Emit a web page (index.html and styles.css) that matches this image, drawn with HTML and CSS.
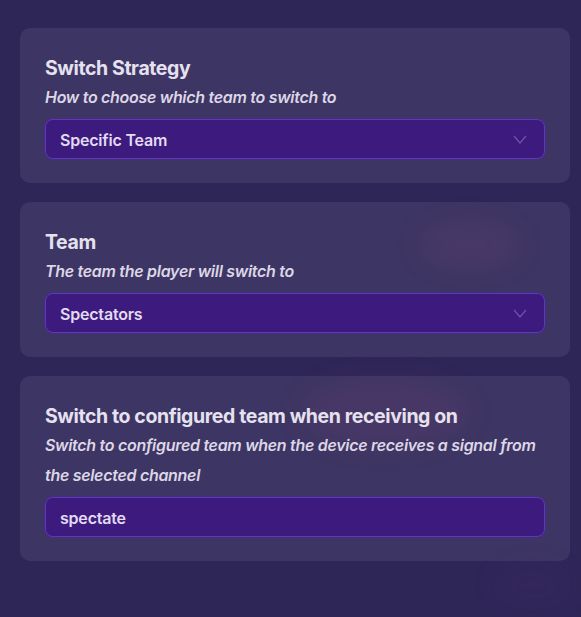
FILE: index.html
```html
<!DOCTYPE html>
<html>
<head>
<meta charset="utf-8">
<link rel="stylesheet" href="styles.css">
</head>
<body>
<div class="page">
  <div class="glow glow-a"></div>
  <div class="glow glow-b"></div>
  <div class="glow glow-c"></div>
  <section class="card">
    <div class="title">Switch Strategy</div>
    <div class="desc">How to choose which team to switch to</div>
    <div class="field select">
      <span class="value">Specific Team</span>
      <svg class="chev" width="14" height="9" viewBox="0 0 14 9"><path d="M1 1 L7 8 L13 1" fill="none" stroke="#6d52a6" stroke-width="1.3"/></svg>
    </div>
  </section>
  <section class="card">
    <div class="title">Team</div>
    <div class="desc">The team the player will switch to</div>
    <div class="field select">
      <span class="value">Spectators</span>
      <svg class="chev" width="14" height="9" viewBox="0 0 14 9"><path d="M1 1 L7 8 L13 1" fill="none" stroke="#6d52a6" stroke-width="1.3"/></svg>
    </div>
  </section>
  <section class="card">
    <div class="title">Switch to configured team when receiving on</div>
    <div class="desc">Switch to configured team when the device receives a signal from the selected channel</div>
    <div class="field">
      <span class="value">spectate</span>
    </div>
  </section>
</div>
</body>
</html>
```
FILE: styles.css
```css
html, body {
  margin: 0;
  padding: 0;
  background: #2f2658;
}
body {
  width: 581px;
  height: 617px;
  overflow: hidden;
  font-family: Inter, "Noto Sans", sans-serif;
}
.page {
  position: relative;
  width: 581px;
  height: 617px;
  box-sizing: border-box;
  padding: 28px 11px 0 20px;
  display: flex;
  flex-direction: column;
  gap: 19px;
  background: #2f2658;
  overflow: hidden;
}
.glow {
  position: absolute;
  border-radius: 50%;
  filter: blur(12px);
  pointer-events: none;
}
.glow-a {
  left: 420px;
  top: 222px;
  width: 100px;
  height: 46px;
  background: rgba(110, 60, 110, 0.18);
}
.glow-b {
  left: 300px;
  top: 378px;
  width: 170px;
  height: 70px;
  background: rgba(120, 60, 110, 0.14);
}
.glow-c {
  left: 495px;
  top: 565px;
  width: 75px;
  height: 40px;
  background: rgba(90, 50, 110, 0.1);
}
.card {
  position: relative;
  width: 550px;
  box-sizing: border-box;
  padding: 26px 25px 24px 25px;
  border-radius: 10px;
  background: rgba(255, 255, 255, 0.07);
}
.title {
  font-size: 19.5px;
  line-height: 28px;
  font-weight: 700;
  letter-spacing: -0.4px;
  color: #e6e1ef;
}
.desc {
  font-size: 16px;
  line-height: 30px;
  font-style: italic;
  font-weight: 600;
  letter-spacing: -0.3px;
  color: #dcd6e6;
  margin-bottom: 7px;
}
.field {
  height: 40px;
  box-sizing: border-box;
  border: 1px solid #6430d2;
  border-radius: 8px;
  background: #3d1a7e;
  display: flex;
  align-items: center;
  justify-content: space-between;
  padding: 1px 17px 0 14px;
  font-size: 16px;
  font-weight: 600;
  letter-spacing: -0.2px;
  color: #e2dbf1;
}
.chev {
  display: block;
  margin-top: -1px;
}
```
